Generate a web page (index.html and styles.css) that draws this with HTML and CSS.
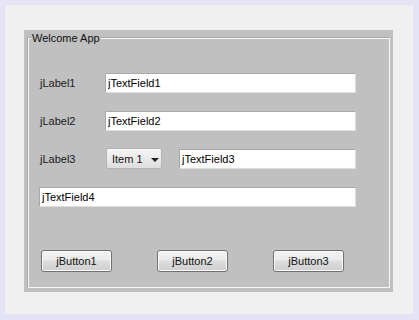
FILE: index.html
```html
<!DOCTYPE html>
<html>
<head>
	<title>Welcome App</title>
	<meta charset="UTF-8">
	<link rel="stylesheet" href="styles.css">
</head>
<body>
<div class="screen">
	<div class="panel">
		<div class="group">
			<span class="group-title">Welcome App</span>
			<div class="form">
				<div class="row">
					<span class="label">jLabel1</span>
					<input class="field field-wide" type="text" value="jTextField1">
				</div>
				<div class="row">
					<span class="label">jLabel2</span>
					<input class="field field-wide" type="text" value="jTextField2">
				</div>
				<div class="row">
					<span class="label">jLabel3</span>
					<div class="combo">Item 1 <span class="arrow"></span></div>
					<input class="field field-mid" type="text" value="jTextField3">
				</div>
				<div class="row">
					<input class="field field-full" type="text" value="jTextField4">
				</div>
			</div>
			<div class="buttons">
				<button class="btn">jButton1</button>
				<button class="btn">jButton2</button>
				<button class="btn">jButton3</button>
			</div>
		</div>
	</div>
</div>
</body>
</html>
```
FILE: styles.css
```css
html, body { margin: 0; padding: 0; }
body { background: #e6e6f6; font-family: "Liberation Sans", Arial, sans-serif; font-size: 11px; color: #000; }
.screen
{
	width: 419px; height: 320px; box-sizing: border-box; border: 5px solid #e4e4f6; border-right-width: 6px; border-bottom-width: 6px;
	background: #f0f0f0; padding: 25px 0 0 19px;
}
.panel
{
	width: 369px; height: 262px; box-sizing: border-box; background: #c0c0c0; padding: 8px 3px 4px 4px;
}
.group
{
	position: relative; height: 250px; box-sizing: border-box; border: 1px solid #f6f6f6;
	box-shadow: -1px -1px 0 #a9a9a9; padding: 34px 0 0 10px;
}
.group-title
{
	position: absolute; top: -8px; left: 2px; padding: 0 1px; background: #c0c0c0; line-height: 14px; color: #111;
}
.form { display: flex; flex-direction: column; gap: 18px; }
.row { display: flex; align-items: center; height: 20px; }
.label { width: 66px; padding-left: 1px; box-sizing: border-box; color: #1a1a1a; }
.field
{
	height: 20px; box-sizing: border-box; margin: 0; border: 1px solid #a9a9a9; border-right-color: #dedede; border-bottom-color: #dedede;
	background: #fff; padding: 0 2px; font: inherit; color: #000; outline: none;
}
.field-wide { width: 251px; }
.field-mid { width: 177px; margin-left: 17px; }
.field-full { width: 317px; }
.combo
{
	width: 56px; height: 21px; box-sizing: border-box; margin-left: 1px; margin-top: -1px; display: flex; align-items: center; gap: 8px;
	padding-left: 5px; border: 1px solid #b4b4b4; border-radius: 2px; background: linear-gradient(#f6f6f6, #dedede); color: #111;
}
.arrow { width: 0; height: 0; border-left: 4px solid transparent; border-right: 4px solid transparent; border-top: 4px solid #222; margin-top: 2px; }
.buttons { display: flex; gap: 45px; margin-top: 43px; padding-left: 2px; }
.btn
{
	width: 71px; height: 22px; box-sizing: border-box; margin: 0; padding: 0; border: 1px solid #707070; border-radius: 3px;
	background: linear-gradient(#f2f2f2 0%, #ebebeb 45%, #dddddd 50%, #cfcfcf 100%); font: inherit; color: #111;
	box-shadow: inset 0 0 0 1px #fcfcfc;
}
```
